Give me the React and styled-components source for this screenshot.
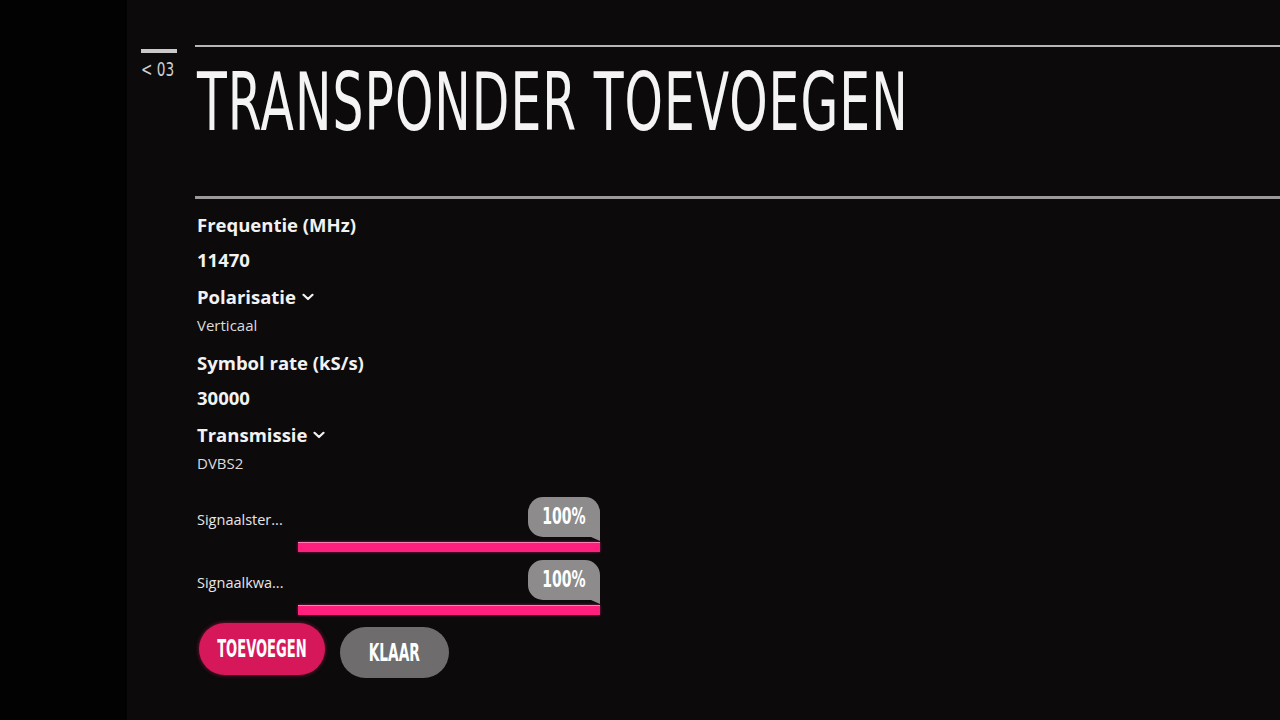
import React from "react";
import styled, { createGlobalStyle } from "styled-components";

const Global = createGlobalStyle`
  html, body { margin: 0; padding: 0; background: #050405; }
  body { width: 1280px; height: 720px; overflow: hidden; }
`;

const narrowFont = `"DejaVu Sans Condensed", "DejaVu Sans", "Liberation Sans", sans-serif`;
const uiFont = `"Open Sans", "Noto Sans", "Liberation Sans", sans-serif`;

const Page = styled.div`
  display: flex;
  width: 1280px;
  height: 720px;
  overflow: hidden;
  background: #040304;
`;

const Bezel = styled.div`
  width: 127px;
  flex: none;
  background: #030203;
`;

const Screen = styled.main`
  flex: 1;
  min-width: 0;
  display: flex;
  flex-direction: column;
  background: #0c0a0b;
  padding-top: 45px;
  overflow: hidden;
`;

const Header = styled.header`
  display: flex;
`;

const Back = styled.div`
  width: 68px;
  flex: none;
  padding-left: 14px;
  padding-top: 4px;
  box-sizing: border-box;
  display: flex;
  flex-direction: column;
  align-items: flex-start;
`;

const BackBar = styled.div`
  width: 36px;
  height: 4px;
  background: #c9c9c9;
`;

/* Squeezed glyphs stand in for the TV's narrow UI face */
const Squeeze = styled.span`
  display: inline-block;
  white-space: nowrap;
  transform: scaleX(${(p) => p.$x});
  transform-origin: ${(p) => p.$origin || "center"} center;
`;

const BackText = styled.span`
  margin-top: 5px;
  font-family: ${narrowFont};
  font-weight: 300;
  font-size: 20px;
  line-height: 22px;
  color: #cfcfcf;
`;

const TitleBlock = styled.div`
  flex: 1;
  min-width: 0;
  display: flex;
  flex-direction: column;
`;

const TopRule = styled.div`
  height: 2px;
  background: #b7b7b7;
`;

const Title = styled.h1`
  margin: 10px 0 0 2px;
  font-family: ${narrowFont};
  font-weight: 400;
  font-size: 80px;
  line-height: 92px;
  color: #f4f4f4;
  letter-spacing: 1.5px;
`;

const Divider = styled.div`
  margin: 47px 0 0 68px;
  height: 3px;
  background: #9a9a9a;
`;

const Body = styled.section`
  padding: 13px 0 0 70px;
  display: flex;
  flex-direction: column;
`;

const Field = styled.div`
  display: flex;
  flex-direction: column;
  margin-bottom: ${(p) => (p.$dropdown ? "15px" : "11px")};
`;

const Label = styled.div`
  display: flex;
  align-items: center;
  gap: 6px;
  font-family: ${uiFont};
  font-weight: 700;
  font-size: 18.5px;
  line-height: 26px;
  color: #f2f2f2;
`;

const Value = styled.div`
  font-family: ${uiFont};
  font-weight: ${(p) => (p.$strong ? 700 : 400)};
  font-size: ${(p) => (p.$strong ? "18.5px" : "15px")};
  line-height: ${(p) => (p.$strong ? "26px" : "20px")};
  margin-top: ${(p) => (p.$strong ? "9px" : "5px")};
  color: ${(p) => (p.$strong ? "#f2f2f2" : "#dcdcdc")};
`;

const Chevron = () => (
  <svg width="12" height="8" viewBox="0 0 12 8" aria-hidden="true">
    <path d="M1.5 1.8 L6 6 L10.5 1.8" fill="none" stroke="#f2f2f2" strokeWidth="2.2" strokeLinecap="round" strokeLinejoin="round" />
  </svg>
);

const Meters = styled.div`
  margin-top: 9px;
  display: flex;
  flex-direction: column;
  gap: 8px;
`;

const MeterRow = styled.div`
  display: grid;
  grid-template-columns: 101px 302px;
`;

const MeterLabel = styled.span`
  font-family: ${uiFont};
  font-size: 14.5px;
  line-height: 20px;
  color: #e6e6e6;
  margin-top: 13px;
`;

const MeterTrack = styled.div`
  display: flex;
  flex-direction: column;
  align-items: flex-end;
  gap: 5px;
`;

const Bubble = styled.div`
  position: relative;
  width: 72px;
  height: 40px;
  box-sizing: border-box;
  background: #8d8b8c;
  border-radius: 15px 15px 0 15px;
  display: flex;
  align-items: center;
  justify-content: center;
  padding-bottom: 2px;
  font-family: ${narrowFont};
  font-weight: 700;
  font-size: 23px;
  color: #ffffff;

  &::after {
    content: "";
    position: absolute;
    right: 0;
    bottom: -4px;
    border-left: 9px solid transparent;
    border-top: 4px solid #8d8b8c;
  }
`;

const Bar = styled.div`
  height: 10px;
  background: #ff1f7c;
  box-shadow: 0 0 3px rgba(255, 40, 130, 0.6);
  border-top: 1px solid #ff7fb4;
  box-sizing: border-box;
`;

const Actions = styled.div`
  margin-top: 8px;
  margin-left: 2px;
  display: flex;
  gap: 15px;
  align-items: flex-start;
`;

const Button = styled.button`
  width: ${(p) => (p.$primary ? "126px" : "109px")};
  height: ${(p) => (p.$primary ? "52px" : "51px")};
  padding: 0;
  border: none;
  border-radius: 26px;
  background: ${(p) => (p.$primary ? "#d6185a" : "#6e6c6d")};
  box-shadow: ${(p) => (p.$primary ? "0 0 4px rgba(230, 30, 100, 0.55)" : "none")};
  margin-top: ${(p) => (p.$primary ? "0" : "4px")};
  display: flex;
  align-items: center;
  justify-content: center;
  font-family: ${narrowFont};
  font-weight: 700;
  font-size: 24px;
  color: #ffffff;
`;

const fields = [
  { label: "Frequentie (MHz)", value: "11470", strong: true },
  { label: "Polarisatie", value: "Verticaal", dropdown: true },
  { label: "Symbol rate (kS/s)", value: "30000", strong: true },
  { label: "Transmissie", value: "DVBS2", dropdown: true },
];

const meters = [
  { label: "Signaalster...", value: 100 },
  { label: "Signaalkwa...", value: 100 },
];

export default function App() {
  return (
    <>
      <Global />
      <Page>
        <Bezel />
        <Screen>
          <Header>
            <Back>
              <BackBar />
              <BackText>
                <Squeeze $x={0.76} $origin="left">&lt; 03</Squeeze>
              </BackText>
            </Back>
            <TitleBlock>
              <TopRule />
              <Title>
                <Squeeze $x={0.678} $origin="left">TRANSPONDER TOEVOEGEN</Squeeze>
              </Title>
            </TitleBlock>
          </Header>
          <Divider />
          <Body>
            {fields.map((f) => (
              <Field key={f.label} $dropdown={f.dropdown}>
                <Label>
                  {f.label}
                  {f.dropdown && <Chevron />}
                </Label>
                <Value $strong={f.strong}>{f.value}</Value>
              </Field>
            ))}
            <Meters>
              {meters.map((m) => (
                <MeterRow key={m.label}>
                  <MeterLabel>{m.label}</MeterLabel>
                  <MeterTrack>
                    <Bubble>
                      <Squeeze $x={0.68}>{m.value}%</Squeeze>
                    </Bubble>
                    <Bar style={{ width: `${m.value}%` }} />
                  </MeterTrack>
                </MeterRow>
              ))}
            </Meters>
            <Actions>
              <Button $primary>
                <Squeeze $x={0.605}>TOEVOEGEN</Squeeze>
              </Button>
              <Button>
                <Squeeze $x={0.635}>KLAAR</Squeeze>
              </Button>
            </Actions>
          </Body>
        </Screen>
      </Page>
    </>
  );
}
